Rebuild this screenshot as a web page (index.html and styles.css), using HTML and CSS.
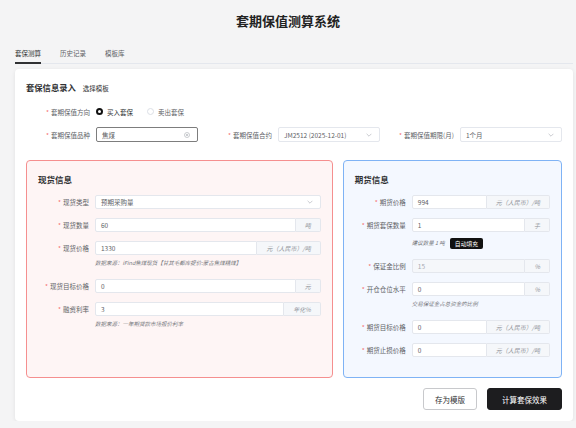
FILE: index.html
```html
<!DOCTYPE html>
<html lang="zh-CN">
<head>
    <meta charset="UTF-8">
    <meta name="viewport" content="width=device-width, initial-scale=1.0">
    <title>套期保值测算系统</title>
    <link rel="stylesheet" href="styles.css">
</head>
<body>
    <h1 class="title">套期保值测算系统</h1>
    <div class="main">
        <div class="tabs">
            <div class="tab active">套保测算</div>
            <div class="tab">历史记录</div>
            <div class="tab">模板库</div>
        </div>

        <div class="card">
            <div class="card-header">
                <span class="card-title">套保信息录入</span>
                <span class="link">选择模板</span>
            </div>

            <div class="top-item direction">
                <label class="label req">套期保值方向</label>
                <div class="radios">
                    <span class="radio"><span class="dot checked"></span>买入套保</span>
                    <span class="radio"><span class="dot"></span>卖出套保</span>
                </div>
            </div>

            <div class="top-grid">
                <div class="top-item">
                    <label class="label req">套期保值品种</label>
                    <div class="input focused">
                        <span class="value">焦煤</span>
                        <svg class="icon" width="6" height="6" viewBox="0 0 6 6"><circle cx="3" cy="3" r="2.5" fill="none" stroke="#a8abb2" stroke-width="0.6"/><path d="M2 2L4 4M4 2L2 4" stroke="#a8abb2" stroke-width="0.6"/></svg>
                    </div>
                </div>
                <div class="top-item">
                    <label class="label req">套期保值合约</label>
                    <div class="input">
                        <span class="value">JM2512 (2025-12-01)</span>
                        <svg class="icon" width="6" height="4" viewBox="0 0 6 4"><polyline points="0.6,0.8 3,3.2 5.4,0.8" fill="none" stroke="#a8abb2" stroke-width="0.6"/></svg>
                    </div>
                </div>
                <div class="top-item">
                    <label class="label req">套期保值期限(月)</label>
                    <div class="input">
                        <span class="value">1个月</span>
                        <svg class="icon" width="6" height="4" viewBox="0 0 6 4"><polyline points="0.6,0.8 3,3.2 5.4,0.8" fill="none" stroke="#a8abb2" stroke-width="0.6"/></svg>
                    </div>
                </div>
            </div>

            <div class="panels">
                <div class="panel spot">
                    <div class="panel-title">现货信息</div>

                    <div class="form-item">
                        <div class="row">
                            <label class="label req">现货类型</label>
                            <div class="input">
                                <span class="value">预期采购量</span>
                                <svg class="icon" width="6" height="4" viewBox="0 0 6 4"><polyline points="0.6,0.8 3,3.2 5.4,0.8" fill="none" stroke="#a8abb2" stroke-width="0.6"/></svg>
                            </div>
                        </div>
                    </div>
                    <div class="form-item">
                        <div class="row">
                            <label class="label req">现货数量</label>
                            <div class="group">
                                <div class="input"><span class="value">60</span></div>
                                <span class="append">吨</span>
                            </div>
                        </div>
                    </div>
                    <div class="form-item">
                        <div class="row">
                            <label class="label req">现货价格</label>
                            <div class="group">
                                <div class="input"><span class="value">1330</span></div>
                                <span class="append">元（人民币）/吨</span>
                            </div>
                        </div>
                        <div class="help">数据来源：iFind焦煤现货【甘其毛都库提价:蒙古焦煤精煤】</div>
                    </div>
                    <div class="form-item">
                        <div class="row">
                            <label class="label req">现货目标价格</label>
                            <div class="group">
                                <div class="input"><span class="value">0</span></div>
                                <span class="append">元</span>
                            </div>
                        </div>
                    </div>
                    <div class="form-item">
                        <div class="row">
                            <label class="label req">融资利率</label>
                            <div class="group">
                                <div class="input"><span class="value">3</span></div>
                                <span class="append">年化%</span>
                            </div>
                        </div>
                        <div class="help">数据来源：一年期贷款市场报价利率</div>
                    </div>
                </div>

                <div class="panel futures">
                    <div class="panel-title">期货信息</div>

                    <div class="form-item">
                        <div class="row">
                            <label class="label req">期货价格</label>
                            <div class="group">
                                <div class="input"><span class="value">994</span></div>
                                <span class="append">元（人民币）/吨</span>
                            </div>
                        </div>
                    </div>
                    <div class="form-item">
                        <div class="row">
                            <label class="label req">期货套保数量</label>
                            <div class="group">
                                <div class="input"><span class="value">1</span></div>
                                <span class="append">手</span>
                            </div>
                        </div>
                        <div class="help suggest">
                            <span>建议数量 1 吨</span>
                            <button class="fill-button">自动填充</button>
                        </div>
                    </div>
                    <div class="form-item">
                        <div class="row">
                            <label class="label req">保证金比例</label>
                            <div class="group">
                                <div class="input disabled"><span class="value">15</span></div>
                                <span class="append">%</span>
                            </div>
                        </div>
                    </div>
                    <div class="form-item">
                        <div class="row">
                            <label class="label req">开仓仓位水平</label>
                            <div class="group">
                                <div class="input"><span class="value">0</span></div>
                                <span class="append">%</span>
                            </div>
                        </div>
                        <div class="help">交易保证金占总资金的比例</div>
                    </div>
                    <div class="form-item">
                        <div class="row">
                            <label class="label req">期货目标价格</label>
                            <div class="group">
                                <div class="input"><span class="value">0</span></div>
                                <span class="append">元（人民币）/吨</span>
                            </div>
                        </div>
                    </div>
                    <div class="form-item">
                        <div class="row">
                            <label class="label req">期货止损价格</label>
                            <div class="group">
                                <div class="input"><span class="value">0</span></div>
                                <span class="append">元（人民币）/吨</span>
                            </div>
                        </div>
                    </div>
                </div>
            </div>

            <div class="actions">
                <button class="btn">存为模版</button>
                <button class="btn primary">计算套保效果</button>
            </div>
        </div>
    </div>
</body>
</html>
```

FILE: styles.css
```css
body {
    margin: 0;
    background-color: #f4f4f5;
    font-family: "Noto Sans CJK SC", "Noto Sans", sans-serif;
    color: #303133;
}

.title {
    margin: 0;
    padding-top: 12px;
    font-size: 13px;
    line-height: 18px;
    font-weight: 700;
    text-align: center;
    color: #222;
}

.main {
    margin: 0 3px 0 15px;
}

/* tabs */
.tabs {
    display: flex;
    gap: 19px;
    margin-top: 14px;
    border-bottom: 1px solid #e4e7ed;
}

.tab {
    font-size: 6.5px;
    line-height: 18px;
    color: #606266;
    border-bottom: 2px solid transparent;
    margin-bottom: -1px;
}

.tab.active {
    color: #303133;
    border-bottom-color: #303133;
}

/* card */
.card {
    margin-top: 5px;
    padding: 11px;
    background-color: #fff;
    border-radius: 4px;
    box-shadow: 0 1px 4px rgba(0, 0, 0, 0.08);
}

.card-header {
    display: flex;
    align-items: baseline;
    gap: 7px;
    line-height: 15px;
    margin-bottom: 8px;
}

.card-title {
    font-size: 8.3px;
    font-weight: 700;
}

.link {
    font-size: 6.5px;
    color: #303133;
}

/* form basics */
.label {
    flex-shrink: 0;
    width: 70px;
    padding-right: 6px;
    box-sizing: border-box;
    text-align: right;
    font-size: 6.5px;
    color: #606266;
    white-space: nowrap;
}

.req::before {
    content: "*";
    color: #f56c6c;
    margin-right: 2px;
}

.input {
    flex: 1;
    min-width: 0;
    height: 15px;
    display: flex;
    align-items: center;
    justify-content: space-between;
    padding: 0 5px;
    box-sizing: border-box;
    border: 1px solid #e4e7ed;
    border-radius: 2px;
    background-color: #fff;
    font-size: 6.5px;
    color: #606266;
}

.input.focused {
    border-color: #7d7d7d;
}

.input.disabled {
    background-color: #f5f7fa;
    color: #a8abb2;
}

.icon {
    flex-shrink: 0;
    margin-right: 2px;
}

.top-item {
    display: flex;
    align-items: center;
    margin-bottom: 8px;
}

.top-grid {
    display: grid;
    grid-template-columns: repeat(3, 1fr);
    gap: 0 10px;
}

.top-grid .top-item {
    margin-bottom: 0;
}

.direction {
    height: 15px;
}

.radios {
    display: flex;
    align-items: center;
}

.radio {
    display: inline-flex;
    align-items: center;
    gap: 4px;
    margin-right: 14px;
    font-size: 6.5px;
    color: #606266;
}

.radio:first-child {
    color: #303133;
}

.dot {
    width: 7px;
    height: 7px;
    border-radius: 50%;
    border: 1px solid #dcdfe6;
    box-sizing: border-box;
    background-color: #fff;
}

.dot.checked {
    border: 2px solid #111;
}

/* panels */
.panels {
    display: grid;
    grid-template-columns: 7fr 5fr;
    gap: 10px;
    margin-top: 18px;
}

.panel {
    border: 1px solid;
    border-radius: 4px;
    padding: 11px;
}

.panel.spot {
    border-color: #f58f8f;
    background-color: #fef5f5;
}

.panel.futures {
    border-color: #7fb3f5;
    background-color: #f4f8ff;
}

.panel-title {
    font-size: 8.5px;
    font-weight: 700;
    line-height: 14px;
    margin-bottom: 9px;
}

.panel .label {
    width: 57px;
}

.form-item {
    margin-bottom: 9px;
}

.row {
    display: flex;
    align-items: center;
    height: 14px;
}

.panel .input {
    height: 14px;
}

.group {
    flex: 1;
    display: flex;
    height: 14px;
}

.group .input {
    border-radius: 2px 0 0 2px;
}

.append {
    display: flex;
    align-items: center;
    padding: 0 9px;
    border: 1px solid #e4e7ed;
    border-left: none;
    border-radius: 0 2px 2px 0;
    background-color: #f5f7fa;
    font-size: 6px;
    font-style: italic;
    color: #909399;
    white-space: nowrap;
}

.help {
    margin-left: 57px;
    padding: 2px 0 1px;
    line-height: 12px;
    font-size: 5.5px;
    font-style: italic;
    color: #74777c;
}

.help.suggest {
    display: flex;
    align-items: center;
    gap: 5px;
    padding: 6px 0 1px;
    line-height: 11px;
}

.fill-button {
    height: 11px;
    padding: 0 5px;
    border: none;
    border-radius: 2px;
    background-color: #111;
    color: #fff;
    font-family: inherit;
    font-size: 5.8px;
    font-style: normal;
    line-height: 11px;
}

/* actions */
.actions {
    display: flex;
    justify-content: flex-end;
    gap: 10px;
    margin-top: 10px;
}

.btn {
    height: 22px;
    padding: 0 11px;
    border: 1px solid #c8c9cc;
    border-radius: 3px;
    background-color: #fff;
    color: #303133;
    font-family: inherit;
    font-size: 7.5px;
}

.btn.primary {
    padding: 0 14px;
    border-color: #1d1d1f;
    background-color: #1d1d1f;
    color: #fff;
}
```
